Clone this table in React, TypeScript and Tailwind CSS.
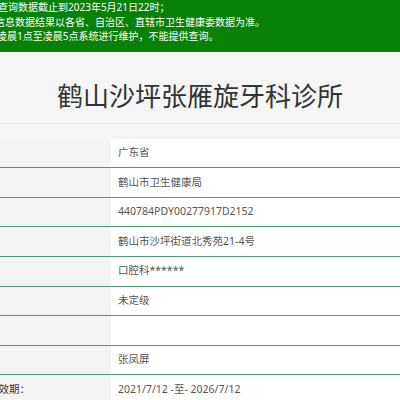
import React from 'react';

interface Row {
  label?: string;
  value: string;
}

const rows: Row[] = [
  { value: '广东省' },
  { value: '鹤山市卫生健康局' },
  { value: '440784PDY00277917D2152' },
  { value: '鹤山市沙坪街道北秀苑21-4号' },
  { value: '口腔科******' },
  { value: '未定级' },
  { value: '' },
  { value: '张凤屏' },
  { label: '有效期：', value: '2021/7/12 -至- 2026/7/12' },
];

const font = { fontFamily: '"Noto Sans", "Noto Sans CJK SC", sans-serif' };

export default function App() {
  return (
    <div className="w-[400px] h-[400px] overflow-hidden bg-[#f5f5f5]" style={font}>
      {/* notice banner */}
      <div className="h-[52px] bg-[#078207] text-white text-[10px] leading-[14.5px] whitespace-nowrap">
        <div className="ml-[-2px]">查询数据截止到2023年5月21日22时；</div>
        <div className="ml-[-5px]">信息数据结果以各省、自治区、直辖市卫生健康委数据为准。</div>
        <div className="ml-[-3px]">凌晨1点至凌晨5点系统进行维护，不能提供查询。</div>
      </div>

      {/* title */}
      <div className="h-[72px] pt-[30px] border-b border-[#e6e6e6]">
        <h1 className="text-center text-[26px] leading-[28px] text-[#333]">鹤山沙坪张雁旋牙科诊所</h1>
      </div>

      {/* detail table */}
      <div className="mt-[14.6px]">
        {rows.map((r, i) => (
          <div key={i} className="flex h-[29.6px] border-b border-[#4a9d6e] box-border">
            <div className="w-[111px] shrink-0 bg-[#f4f4f4] flex items-center text-[10.5px] text-[#333] whitespace-nowrap">
              {r.label && <span className="ml-[-12px]">{r.label}</span>}
            </div>
            <div className="flex-1 bg-white flex items-center pl-[7px] text-[10.5px] text-[#555] whitespace-nowrap">
              {r.value}
            </div>
          </div>
        ))}
      </div>
    </div>
  );
}
